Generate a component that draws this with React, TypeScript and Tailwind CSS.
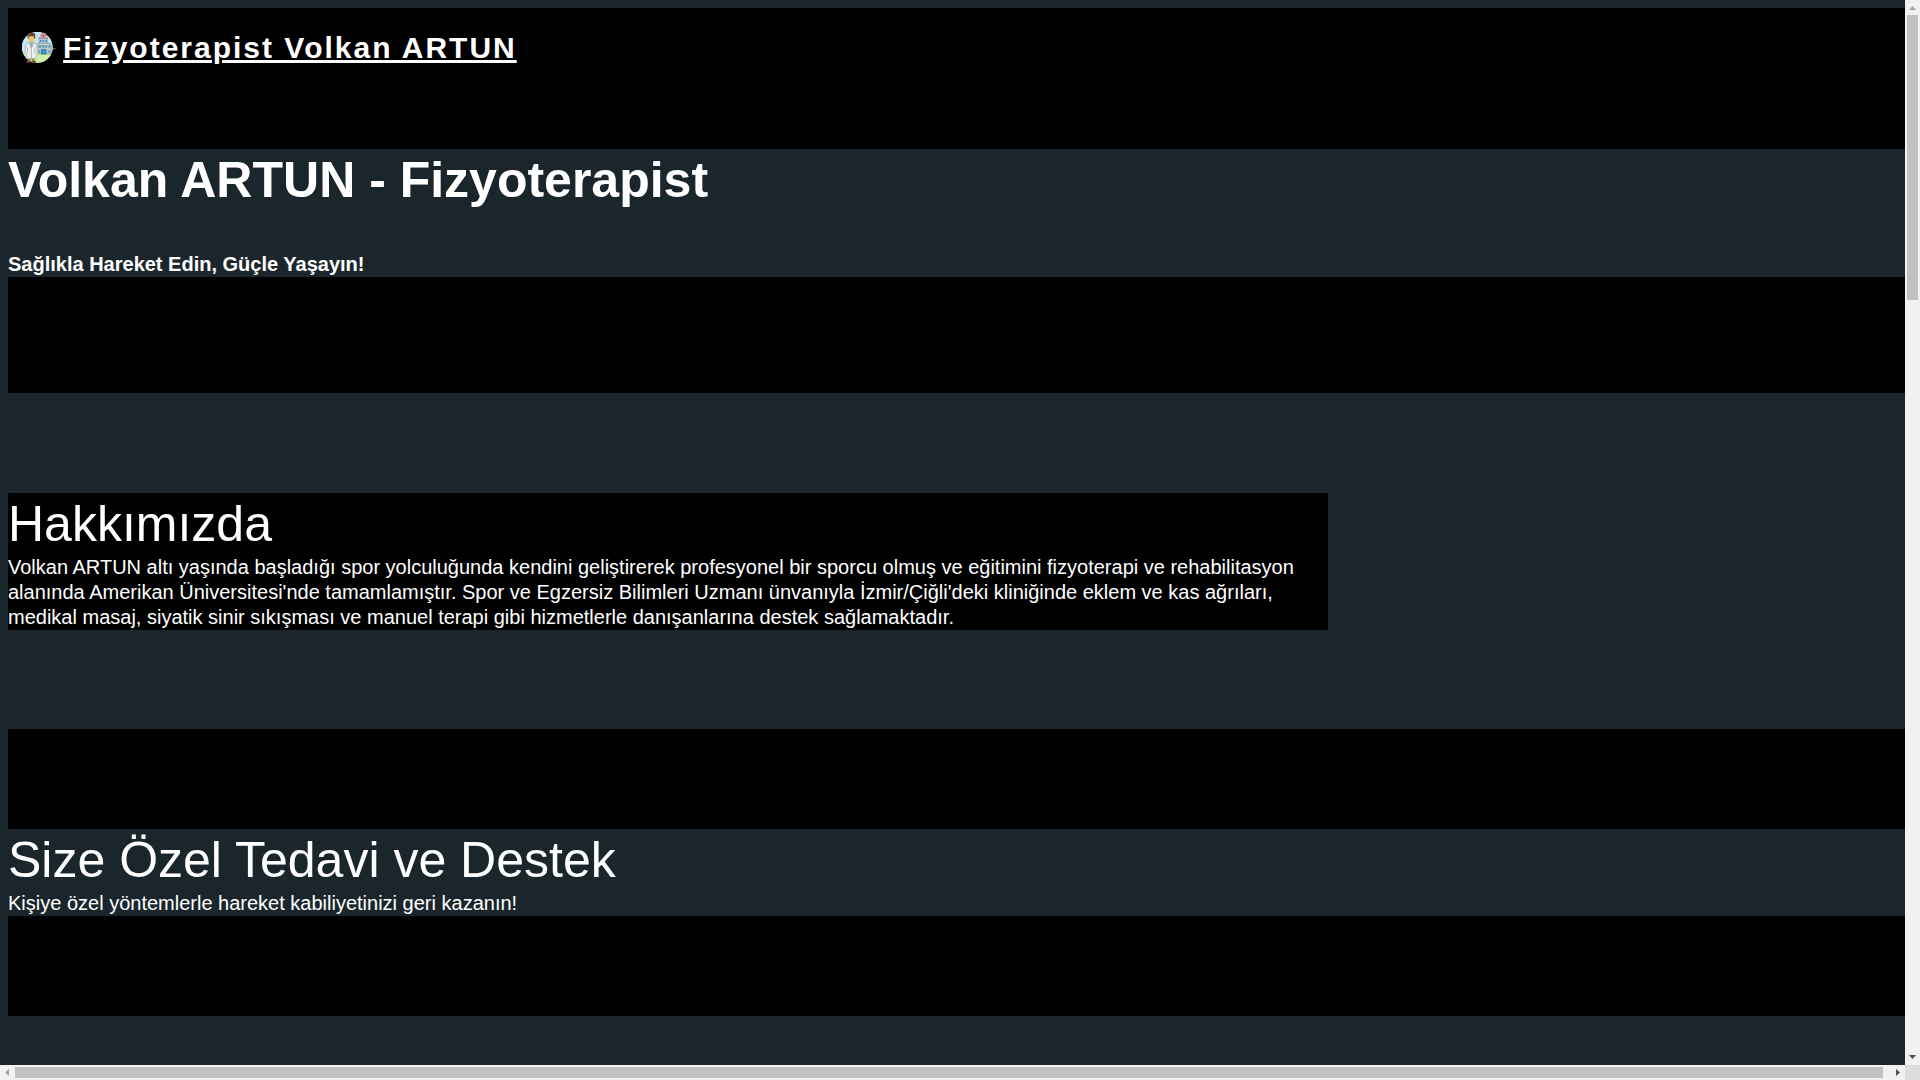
function ClinicLogo() {
  return (
    <svg viewBox="24 24 105 99" className="h-8 w-[34px] shrink-0" aria-hidden="true">
      <defs>
        <clipPath id="disc">
          <circle cx="71" cy="71" r="48" />
        </clipPath>
      </defs>
      <g clipPath="url(#disc)">
        <rect x="20" y="20" width="105" height="105" fill="#c3e8f8" />
        <rect x="20" y="92" width="105" height="30" fill="#cdf2a4" />
      </g>
      {/* clinic building */}
      <path d="M73 60h4V42h25v18h12v32H73z" fill="#b9c4c9" stroke="#7d878c" strokeWidth="2" />
      <path d="M71 60h44M74 43h31M71 74h44" stroke="#8d989d" strokeWidth="3" />
      <path d="M72 62h42M72 76h42" stroke="#e6edef" strokeWidth="2" />
      <circle cx="90" cy="35" r="8" fill="#f1cfcb" stroke="#8c7a7a" strokeWidth="2" />
      <path d="M90 30v11M84 35h12" stroke="#dd4f42" strokeWidth="4" />
      <path d="M80 52h4M88 52h4M96 52h4M77 68h5M87 68h5M96 68h5M106 68h4M76 84h4M106 84h4" stroke="#2a91c8" strokeWidth="6" />
      <rect x="84" y="78" width="14" height="14" fill="#1e9fdf" stroke="#37677f" strokeWidth="2" />
      <path d="M112 76h16M118 70v14" stroke="#aebabd" strokeWidth="2" />
      {/* doctor */}
      <path d="M42 100h9v15h-9zM54 100h9v15h-9z" fill="#a48355" />
      <path d="M38 114h13v5H38zM54 114h13v5H54z" fill="#6b4630" />
      <path d="M43 57l-7 4-3 27 5 5v13h30V93l4-5-3-27-7-4z" fill="#edf0ef" stroke="#9da5a4" strokeWidth="2" />
      <path d="M46 56l7 16 7-16z" fill="#83b6ae" />
      <path d="M53 68v38M41 72v18M64 72v18M44 60l8 12M61 60l-7 12" stroke="#8d9696" strokeWidth="2" fill="none" />
      <path d="M44 36h18v13l-5 8h-7l-6-8z" fill="#efc36c" />
      <path d="M41 44V32l5-6h15l4 6v12h-4v-7H45v7z" fill="#69443a" />
    </svg>
  );
}

function VerticalScrollbar() {
  return (
    <div className="flex flex-col items-center bg-[#f1f1f1]" aria-hidden="true">
      <svg viewBox="0 0 15 15" className="size-[15px] shrink-0">
        <path d="M4 10h7L7.500 6z" fill="#a3a3a3" />
      </svg>
      <div className="flex min-h-0 w-[11px] flex-1">
        <div className="h-[27.5%] w-full bg-[#c1c1c1]" />
      </div>
      <svg viewBox="0 0 15 15" className="size-[15px] shrink-0">
        <path d="M4 5h7L7.500 9z" fill="#505050" />
      </svg>
    </div>
  );
}

function HorizontalScrollbar() {
  return (
    <div className="flex items-center bg-[#f1f1f1]" aria-hidden="true">
      <svg viewBox="0 0 15 15" className="size-[15px] shrink-0">
        <path d="M9 4v7L5 7.500z" fill="#a3a3a3" />
      </svg>
      <div className="h-[11px] flex-1">
        <div className="h-full w-[99.6%] bg-[#c1c1c1]" />
      </div>
      <svg viewBox="0 0 15 15" className="size-[15px] shrink-0">
        <path d="M6 4v7l4-3.500z" fill="#505050" />
      </svg>
    </div>
  );
}

export default function App() {
  return (
    <div className="grid h-screen grid-cols-[minmax(0,1fr)_15px] grid-rows-[minmax(0,1fr)_15px] bg-[#1b262c] font-['Liberation_Sans',Arial,sans-serif] text-xl leading-[25px] text-white">
      <div className="overflow-hidden pt-2 pl-2">
        <header className="h-[141px] bg-black px-[14px] pt-[22px]">
          <a href="#" className="inline-flex items-center gap-[7px]">
            <ClinicLogo />
            <span className="text-[30px] leading-[36px] font-bold tracking-[2px] underline">
              Fizyoterapist Volkan ARTUN
            </span>
          </a>
        </header>
        <main>
          <section>
            <h1 className="text-[50px] leading-[62px] font-bold">Volkan ARTUN - Fizyoterapist</h1>
            <p className="mt-[41px] font-bold">Sağlıkla Hareket Edin, Güçle Yaşayın!</p>
          </section>
          <div className="h-[116px] bg-black" />
          <section className="mt-[100px] mb-[99px] max-w-[1320px] bg-black">
            <h2 className="text-[50px] leading-[62px]">Hakkımızda</h2>
            <p>
              Volkan ARTUN altı yaşında başladığı spor yolculuğunda kendini geliştirerek profesyonel bir sporcu olmuş ve
              eğitimini fizyoterapi ve rehabilitasyon alanında Amerikan Üniversitesi'nde tamamlamıştır. Spor ve Egzersiz
              Bilimleri Uzmanı ünvanıyla İzmir/Çiğli'deki kliniğinde eklem ve kas ağrıları, medikal masaj, siyatik sinir
              sıkışması ve manuel terapi gibi hizmetlerle danışanlarına destek sağlamaktadır.
            </p>
          </section>
          <div className="h-[100px] bg-black" />
          <section>
            <h2 className="text-[50px] leading-[62px]">Size Özel Tedavi ve Destek</h2>
            <p>Kişiye özel yöntemlerle hareket kabiliyetinizi geri kazanın!</p>
          </section>
          <div className="h-[100px] bg-black" />
        </main>
      </div>
      <VerticalScrollbar />
      <HorizontalScrollbar />
      <div className="bg-[#dcdcdc]" />
    </div>
  );
}
